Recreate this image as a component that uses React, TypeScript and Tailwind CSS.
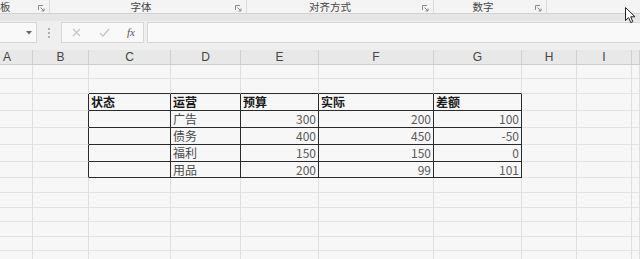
import React from "react";

const cols = [
  { key: "A", w: "w-[33px]", label: "justify-start pl-[3px]" },
  { key: "B", w: "w-[56px]", label: "justify-center" },
  { key: "C", w: "w-[82px]", label: "justify-center" },
  { key: "D", w: "w-[70px]", label: "justify-center" },
  { key: "E", w: "w-[78px]", label: "justify-center" },
  { key: "F", w: "w-[115px]", label: "justify-center" },
  { key: "G", w: "w-[88px]", label: "justify-center" },
  { key: "H", w: "w-[55px]", label: "justify-center" },
  { key: "I", w: "w-[55px]", label: "justify-center" },
  { key: "", w: "flex-1", label: "justify-center" },
];

type Row = { h: string; cells?: (string | number)[] };

const tableRows: (string | number)[][] = [
  ["状态", "运营", "预算", "实际", "差额"],
  ["", "广告", 300, 200, 100],
  ["", "债务", 400, 450, -50],
  ["", "福利", 150, 150, 0],
  ["", "用品", 200, 99, 101],
];

const rows: Row[] = [
  { h: "h-[14px]" },
  { h: "h-[15px]" },
  { h: "h-[17px]", cells: tableRows[0] },
  { h: "h-[17px]", cells: tableRows[1] },
  { h: "h-[17px]", cells: tableRows[2] },
  { h: "h-[17px]", cells: tableRows[3] },
  { h: "h-[16px]", cells: tableRows[4] },
  { h: "h-[15px]" },
  { h: "h-[15px]" },
  { h: "h-[14px]" },
  { h: "h-[15px]" },
  { h: "h-[14px]" },
  { h: "h-[15px]" },
];

function Launcher() {
  return (
    <svg width="7" height="7" viewBox="0 0 7 7" className="shrink-0">
      <path d="M0.5 5V0.5H5" fill="none" stroke="#8a8a8a" strokeWidth="1" />
      <path d="M2.5 2.5L6 6M6 3.5V6H3.5" fill="none" stroke="#8a8a8a" strokeWidth="1" />
    </svg>
  );
}

function RibbonGroup({ label, w, pad }: { label: string; w: string; pad: string }) {
  return (
    <div className={`relative flex h-full items-center border-r border-[#dadada] ${w}`}>
      <span className={`flex-1 text-center ${pad}`}>{label}</span>
      <span className="absolute right-[4px] top-[5px]">
        <Launcher />
      </span>
    </div>
  );
}

export default function App() {
  return (
    <div
      className="relative h-[259px] w-[640px] overflow-hidden bg-[#f7f7f7] text-[12px] text-[#333]"
      style={{ fontFamily: '"Noto Sans CJK SC", "Noto Sans", sans-serif' }}
    >
      {/* ribbon group labels */}
      <div className="flex h-[13px] bg-[#f4f4f4] text-[10.5px] leading-[13px] text-[#444]">
        <div className="relative flex w-[50px] items-center border-r border-[#dadada]">
          <span>板</span>
          <span className="absolute right-[4px] top-[5px]">
            <Launcher />
          </span>
        </div>
        <RibbonGroup label="字体" w="w-[197px]" pad="pr-[14px]" />
        <RibbonGroup label="对齐方式" w="w-[187px]" pad="pr-[20px]" />
        <RibbonGroup label="数字" w="w-[113px]" pad="pr-[14px]" />
        <div className="flex-1" />
      </div>
      <div className="h-[8px] border-t border-[#d2d2d2] bg-[#e6e6e6]" />

      {/* formula bar */}
      <div className="flex h-[29px] items-start bg-[#efefef] pt-[1px]">
        <div className="flex h-[21px] w-[37px] items-center justify-end border border-l-0 border-[#d6d6d6] bg-[#f9f9f9] pr-[4px]">
          <svg width="6" height="4" viewBox="0 0 6 4">
            <path d="M0 0h6L3 3.5z" fill="#666" />
          </svg>
        </div>
        <div className="flex h-[21px] w-[24px] flex-col items-center justify-center gap-[2px]">
          <span className="h-[2px] w-[2px] bg-[#b0b0b0]" />
          <span className="h-[2px] w-[2px] bg-[#b0b0b0]" />
          <span className="h-[2px] w-[2px] bg-[#b0b0b0]" />
        </div>
        <div className="flex h-[21px] w-[83px] items-center border border-[#d6d6d6] bg-[#f9f9f9]">
          <svg width="9" height="9" viewBox="0 0 9 9" className="ml-[10px]">
            <path d="M1 1l7 7M8 1L1 8" stroke="#c4c4c4" strokeWidth="1.2" fill="none" />
          </svg>
          <svg width="11" height="9" viewBox="0 0 11 9" className="ml-[18px]">
            <path d="M1 5l3 3 6-7" stroke="#c4c4c4" strokeWidth="1.3" fill="none" />
          </svg>
          <span
            className="ml-[17px] text-[11px] italic leading-none text-[#555]"
            style={{ fontFamily: '"Liberation Serif", serif' }}
          >
            fx
          </span>
        </div>
        <div className="ml-[3px] h-[21px] flex-1 border border-r-0 border-[#d6d6d6] bg-[#f9f9f9]" />
      </div>

      {/* column headers */}
      <div className="flex h-[15px] border-b border-[#cdcdcd] bg-[#e8e8e8] text-[12px] leading-none text-[#444]">
        {cols.map((c, ci) => (
          <div
            key={ci}
            className={`flex h-full items-center border-r border-[#d0d0d0] ${c.w} ${c.label}`}
            style={{ fontFamily: '"Liberation Sans", sans-serif' }}
          >
            {c.key}
          </div>
        ))}
      </div>

      {/* grid */}
      {rows.map((r, ri) => {
        const inTable = !!r.cells;
        const aboveTable = ri === 1;
        return (
          <div key={ri} className={`flex ${r.h}`}>
            {cols.map((c, ci) => {
              const tcol = ci >= 2 && ci <= 6;
              const dark = inTable && tcol;
              const rightDark = dark || (inTable && ci === 1);
              const bottomDark = dark || (aboveTable && tcol);
              const val = r.cells && tcol ? r.cells[ci - 2] : "";
              const isHead = ri === 2;
              const isNum = typeof val === "number";
              return (
                <div
                  key={ci}
                  className={`flex h-full items-center overflow-hidden whitespace-nowrap border-r border-b leading-none ${c.w} ${
                    rightDark ? "border-r-[#2a2a2a]" : "border-r-[#e0e0e0]"
                  } ${bottomDark ? "border-b-[#2a2a2a]" : "border-b-[#e2e2e2]"} ${
                    isNum ? "justify-end pr-[2px] text-[#5a5a5a]" : "justify-start pl-[2px]"
                  } ${isHead ? "font-bold text-[#1a1a1a]" : !isNum ? "text-[#4a4a4a]" : ""}`}
                >
                  {val}
                </div>
              );
            })}
          </div>
        );
      })}

      {/* mouse pointer */}
      <svg
        width="11"
        height="17"
        viewBox="0 0 11 17"
        className="absolute left-[625px] top-[7px]"
      >
        <path
          d="M0.5 0.5V13.5L3.6 10.6L5.8 15.6L7.8 14.7L5.7 9.8H10Z"
          fill="#fff"
          stroke="#222"
          strokeWidth="1"
          strokeLinejoin="round"
        />
      </svg>
    </div>
  );
}
